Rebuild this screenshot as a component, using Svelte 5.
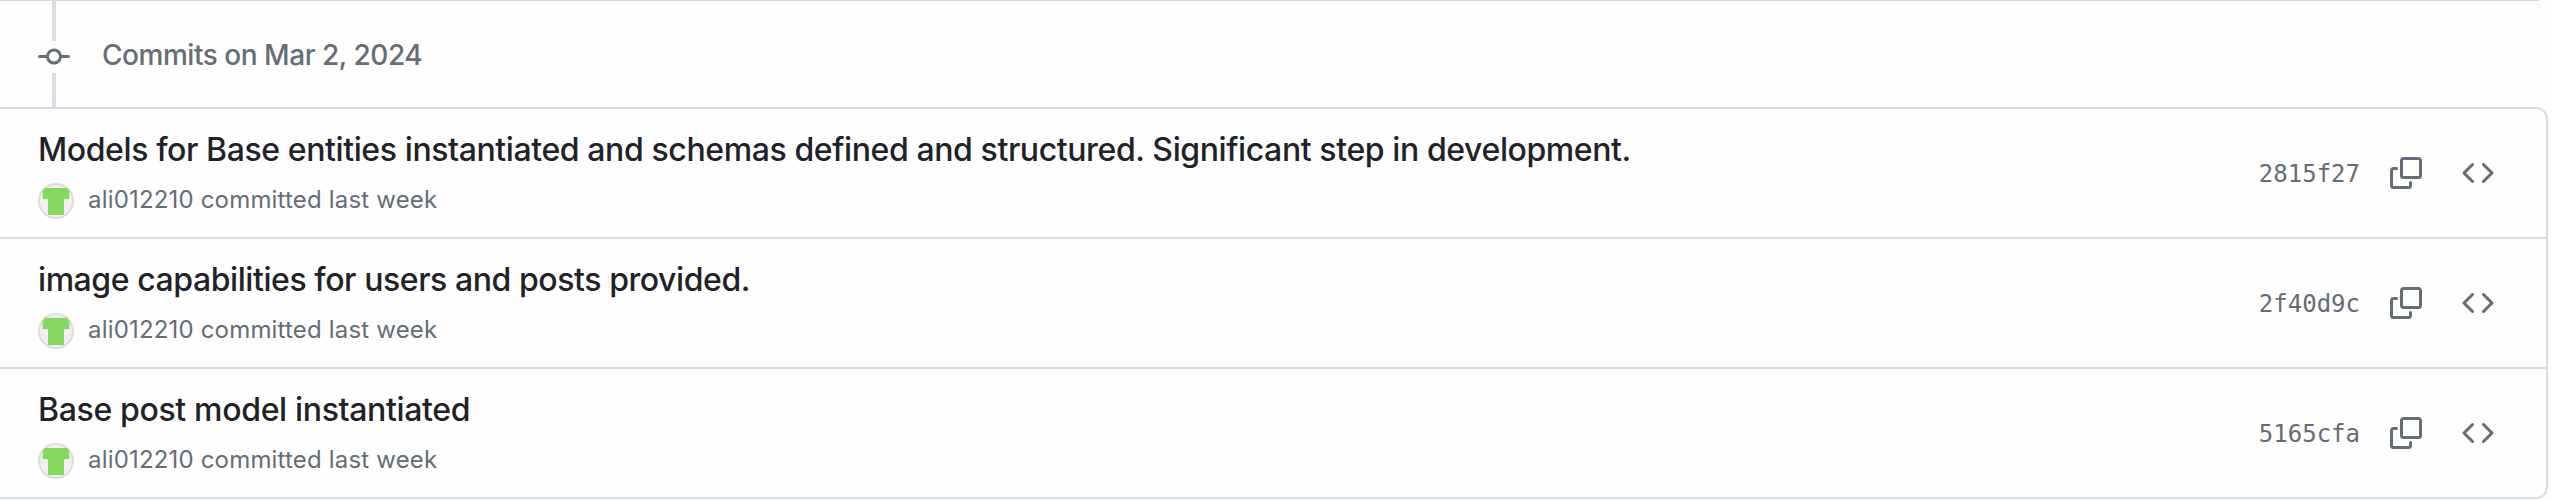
<script>
  const commits = [
    { title: 'Models for Base entities instantiated and schemas defined and structured. Significant step in development.', hash: '2815f27', kind: 'long' },
    { title: 'image capabilities for users and posts provided.', hash: '2f40d9c', kind: 'medium' },
    { title: 'Base post model instantiated', hash: '5165cfa', kind: 'short' }
  ];
</script>

<main>
  <header>
    <div class="rail">
      <span class="line top"></span>
      <svg class="dot" viewBox="0 0 16 16" width="32" height="32"><path d="M11.93 8.5a4.002 4.002 0 0 1-7.86 0H.75a.75.75 0 0 1 0-1.5h3.32a4.002 4.002 0 0 1 7.86 0h3.32a.75.75 0 0 1 0 1.5Zm-1.43-.75a2.5 2.5 0 1 0-5 0 2.5 2.5 0 0 0 5 0Z" /></svg>
      <span class="line bottom"></span>
    </div>
    <h2><span>Commits on Mar 2, 2024</span></h2>
  </header>

  <ol>
    {#each commits as c}
      <li>
        <div class="info">
          <p class="title"><span class={c.kind}>{c.title}</span></p>
          <div class="meta">
            <svg class="avatar" viewBox="0 0 36 36" width="36" height="36">
              <circle cx="18" cy="18" r="17" fill="#f0f0f0" stroke="#dddddf" stroke-width="2" />
              <path d="M7 5H29L31.3 8V16H26V32H10V16H4.7V8Z" fill="#86d75f" />
            </svg>
            <span class="by">ali012210 committed last week</span>
          </div>
        </div>
        <code>{c.hash}</code>
        <svg class="copy" viewBox="0 0 16 16" width="32" height="32"><path d="M0 6.75C0 5.784.784 5 1.75 5h1.5a.75.75 0 0 1 0 1.5h-1.5a.25.25 0 0 0-.25.25v7.5c0 .138.112.25.25.25h7.5a.25.25 0 0 0 .25-.25v-1.5a.75.75 0 0 1 1.5 0v1.5A1.75 1.75 0 0 1 9.25 16h-7.5A1.75 1.75 0 0 1 0 14.25Z" /><path d="M5 1.75C5 .784 5.784 0 6.75 0h7.5C15.216 0 16 .784 16 1.75v7.5A1.75 1.75 0 0 1 14.25 11h-7.5A1.75 1.75 0 0 1 5 9.25Zm1.75-.25a.25.25 0 0 0-.25.25v7.5c0 .138.112.25.25.25h7.5a.25.25 0 0 0 .25-.25v-7.5a.25.25 0 0 0-.25-.25Z" /></svg>
        <svg class="view" viewBox="0 0 16 16" width="32" height="32"><path d="m11.28 3.22 4.25 4.25a.75.75 0 0 1 0 1.06l-4.25 4.25a.749.749 0 0 1-1.275-.326.749.749 0 0 1 .215-.734L13.94 8l-3.72-3.72a.749.749 0 0 1 .326-1.275.749.749 0 0 1 .734.215Zm-6.56 0a.751.751 0 0 1 1.042.018.751.751 0 0 1 .018 1.042L2.06 8l3.72 3.72a.749.749 0 0 1-.326 1.275.749.749 0 0 1-.734-.215L.47 8.53a.75.75 0 0 1 0-1.06Z" /></svg>
      </li>
    {/each}
  </ol>
</main>

<style>
  :global(body) {
    margin: 0;
    background: #fff;
  }
  main {
    height: 500px;
    overflow: hidden;
    font-family: Inter, sans-serif;
    color: #1f2328;
    background: linear-gradient(#d5dbe2, #d5dbe2) 0 0 / 2539px 1px no-repeat #fefefe;
  }
  header {
    display: flex;
    height: 107px;
    padding-left: 38px;
    gap: 32px;
  }
  .rail {
    display: flex;
    flex-direction: column;
    align-items: center;
    width: 32px;
  }
  .line {
    width: 4px;
    background: #d8dee4;
  }
  .top { height: 41px; }
  .bottom { height: 34px; }
  svg { display: block; flex: none; fill: #656d76; }
  h2 {
    margin: 0;
    padding-top: 34px;
    font-size: 28px;
    line-height: 42px;
    font-weight: 500;
    letter-spacing: -0.47px;
    color: #656d76;
    white-space: nowrap;
  }
  ol {
    list-style: none;
    margin: 0;
    padding: 0;
    box-sizing: border-box;
    width: 2548px;
    height: 392px;
    border: 2px solid #d5dbe2;
    border-left: 0;
    border-radius: 0 12px 12px 0;
  }
  li {
    display: flex;
    align-items: center;
    box-sizing: border-box;
    height: 130px;
    padding: 0 52px 0 38px;
    border-bottom: 2px solid #dcdcde;
  }
  li:last-child { height: 128px; border-bottom: 0; }
  .info {
    flex: 1;
    height: 128px;
    box-sizing: border-box;
    padding-top: 17px;
  }
  .title {
    margin: 0;
    height: 57px;
    line-height: 48px;
    font-size: 32px;
    font-weight: 500;
    letter-spacing: -0.4px;
    white-space: nowrap;
  }
  .medium { letter-spacing: -0.43px; }
  .short { letter-spacing: -0.34px; }
  .meta {
    display: flex;
    align-items: center;
    gap: 14px;
    height: 36px;
    font-size: 24px;
    line-height: 36px;
    letter-spacing: 0.18px;
    color: #656d76;
  }
  .by { padding-bottom: 2px; }
  code {
    font-family: "DejaVu Sans Mono", monospace;
    font-size: 24px;
    line-height: 36px;
    color: #656d76;
    margin-right: 30px;
    padding-top: 1px;
  }
  .view { margin-left: 40px; }
</style>
